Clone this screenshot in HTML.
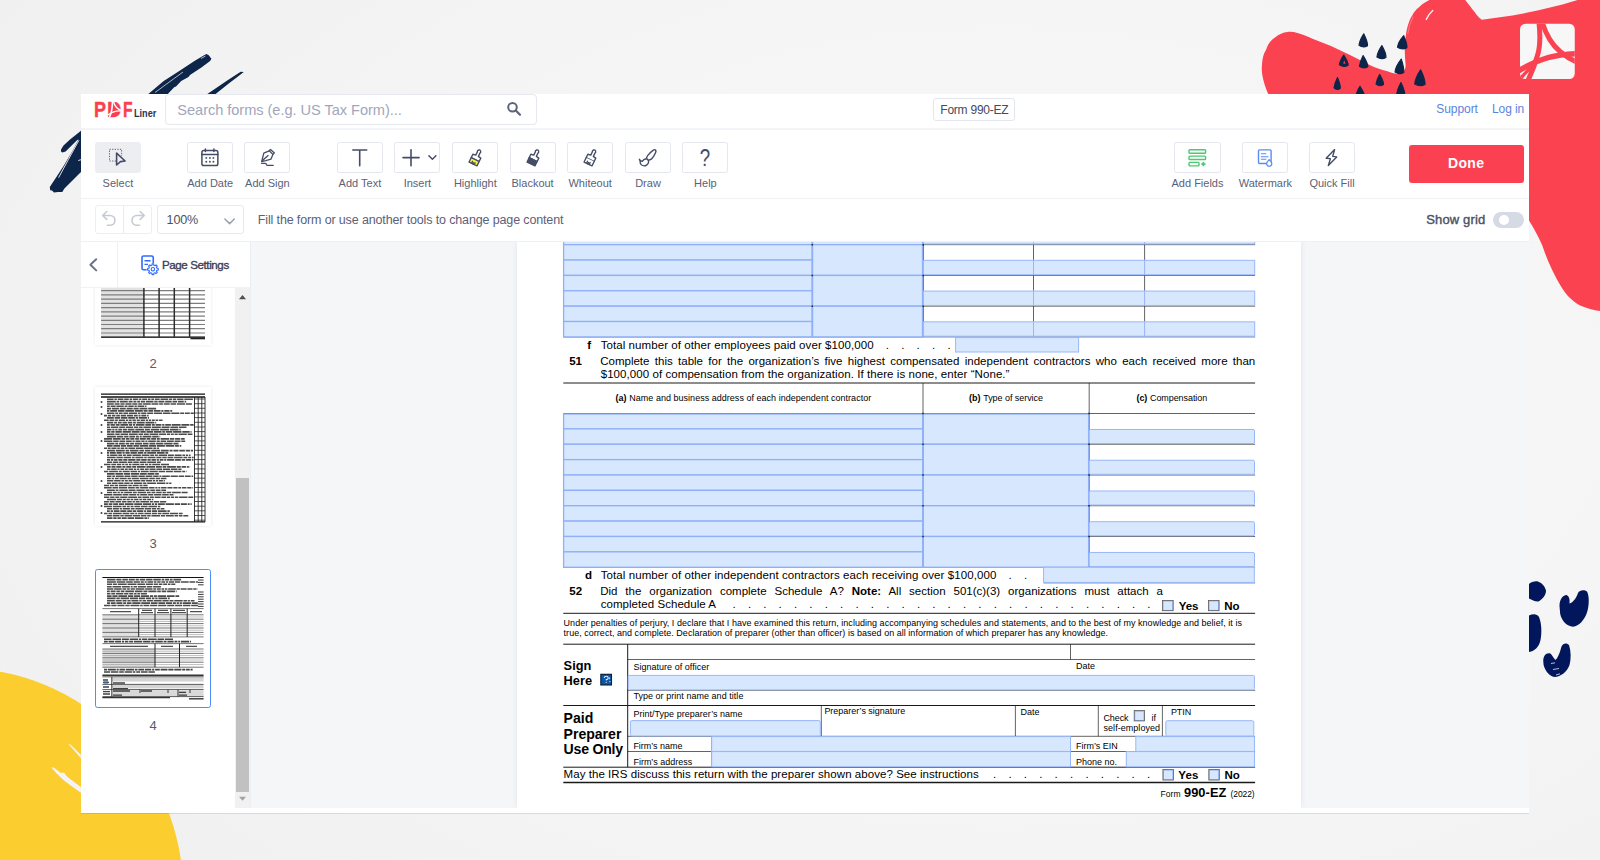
<!DOCTYPE html>
<html lang="en"><head><meta charset="utf-8"><title>Form 990-EZ - PDFLiner</title>
<style>
html,body{margin:0;padding:0}
body{width:1600px;height:860px;overflow:hidden;position:relative;background:#f2f2f2;font-family:"Liberation Sans", "DejaVu Sans", sans-serif;}
#root{position:absolute;left:0;top:0;width:1600px;height:860px;overflow:hidden;
 background:radial-gradient(ellipse 1300px 800px at 1000px 400px,#f8f8f8 0%,#f5f5f5 50%,#efefef 100%);}
#root div,#root svg{position:absolute;box-sizing:border-box}
.t{white-space:nowrap;color:#000}
</style></head><body><div id="root">
<svg width="1600" height="860" viewBox="0 0 1600 860" style="left:0;top:0"><circle cx="-40.3" cy="891.4" r="223.4" fill="#fbcd2e"/><path d="M68.4,744 L70.5,744.6 L82,756 L82,759.5 Z" fill="#f4f4f4"/><path d="M51.3,767.2 L54,767.8 L61,773 L64,772.6 L67,776.6 L82,788 L82,793.5 L72,786.5 L60,777.5 Z" fill="#f4f4f4"/><path d="M57,774 L71,788" stroke="#fbcd2e" stroke-width="0.8" fill="none"/><path d="M1271,100 C1263,84 1261,72 1262,65 C1262.5,57 1264,53 1266,50 C1268,44 1271,40 1275,37.5 C1279,34 1283,32.5 1287.5,32 C1291,31.6 1294,32 1297.5,33 C1303,34.5 1307,36.5 1312.5,38.75 L1331,46 L1350,55 L1368.75,64.4 C1375,67.5 1381,69.5 1387.5,71.25 C1391,72.5 1394,73.5 1397.5,73.75 C1400,73.6 1402,72.8 1403.75,71 C1405,69.5 1405.6,68 1405.6,65 C1405.2,60 1404.75,55 1404.75,50 C1404.75,46 1405,42 1405.6,37.5 C1406,33 1406.8,29 1408,25 C1409,21.5 1410.5,18 1412.5,15 C1414,12 1416,9.5 1418.75,7.5 C1421,5 1424,2.8 1427.5,1 L1435,-3 L1463,-3 C1466,1 1468,3.5 1470,6 C1472,9 1473.5,10.5 1475,12.5 C1477,15.5 1479,18 1481.9,19.75 L1512.5,15.6 L1537.5,10.6 L1562.5,4.4 L1577.5,0 L1590,-3 L1603,-3 L1603,311.4 L1600,311 C1595,310.2 1591,309.5 1587,308 C1582,306.5 1578,304.5 1574,301.4 C1569.5,298 1566,294.5 1562.8,289.3 C1558.5,282.5 1555,276 1551.6,268.8 C1548,261 1545,253.5 1542.3,245.6 C1538.5,236.5 1534,228.5 1529,220.5 L1520,210 L1520,100 Z" fill="#fa4251"/><path d="M1432.75,10.6 Q1428.5,14.5 1426.25,19.4" stroke="#fdeff0" stroke-width="1.4" fill="none" stroke-linecap="round"/><path d="M1413,17 Q1409,25 1407.75,33.75" stroke="#fd7d87" stroke-width="0.9" fill="none" stroke-linecap="round"/><rect x="1520" y="23.75" width="54.75" height="55.25" rx="5.5" fill="#f7f7f8"/><clipPath id="lg"><rect x="1520" y="23.75" width="54.75" height="55.25" rx="5.5"/></clipPath><g clip-path="url(#lg)" stroke="#fa4251" fill="none"><path d="M1538.8,21 C1540.6,36 1540,48 1537.3,56 C1535,64 1532,72 1527.3,82" stroke-width="5"/><path d="M1541.3,19 C1545,33 1551,44 1560,51.5 C1566,56.5 1571,59.8 1578,62.6" stroke-width="5"/><path d="M1517,72 C1526,66 1536,61 1548,57.6 C1558,55 1567,54 1578,53.6" stroke-width="5.5"/><path d="M1518,81 L1531.5,66.5" stroke-width="3.4"/></g><g fill="#0d2548" stroke="#0d2548" stroke-width="1.1" stroke-linejoin="round"><path d="M1363.75,33.75 Q1368,42.325 1367.5,45.9 Q1363.25,48.4 1359,45.4 Q1359.5,40.325 1363.75,33.75Z"/><path d="M1403.75,35.6 Q1407.4,44.175 1406.9,47.75 Q1402.2,50.25 1397.5,47.25 Q1398,42.175 1403.75,35.6Z"/><path d="M1381.9,45.6 Q1386.5,54.05 1386,57.5 Q1381.45,60 1376.9,57 Q1377.4,52.05 1381.9,45.6Z"/><path d="M1343.75,55 Q1348.6,62.625 1348.1,65.25 Q1343.75,67.75 1339.4,64.75 Q1339.9,60.625 1343.75,55Z"/><path d="M1363.1,55.6 Q1368.25,63.75 1367.75,66.9 Q1363.58,69.4 1359.4,66.4 Q1359.9,61.75 1363.1,55.6Z"/><path d="M1401.25,59 Q1404.25,68.25 1403.75,72.5 Q1399.38,75 1395,72 Q1395.5,66.25 1401.25,59Z"/><path d="M1420.6,69.75 Q1425.5,79.675 1425,84.6 Q1419.88,87.1 1414.75,84.1 Q1415.25,77.675 1420.6,69.75Z"/><path d="M1337.5,77.5 Q1340.75,85.45 1340.25,88.4 Q1337.12,90.9 1334,87.9 Q1334.5,83.45 1337.5,77.5Z"/><path d="M1379.75,74.4 Q1384,82 1383.5,84.6 Q1379.75,87.1 1376,84.1 Q1376.5,80 1379.75,74.4Z"/><path d="M1360,86.25 Q1365.3,94.625 1364.8,98 Q1360.2,100.5 1355.6,97.5 Q1356.1,92.625 1360,86.25Z"/><path d="M1401,82.5 Q1405.3,91.75 1404.8,96 Q1400.65,98.5 1396.5,95.5 Q1397,89.75 1401,82.5Z"/></g><path d="M1344.2,60.5 L1345.6,63.8 L1343.2,63.6Z" fill="#fa4251"/><g fill="#0d2548"><path d="M206.2,54 L208.5,55 L209.5,56.2 L211.4,58.8 L210.1,61 L201.4,67.6 L190,75 L188.5,77 L181.2,81.1 L176,86.5 L174.2,87.2 L163,99 L143,99 L148.9,93.5 L163.7,81.1 L181.2,69.7 L194.4,61 Z"/><path d="M243.8,71.9 L240.7,71.7 L227.6,80.2 L200,99 L210,99 L216.2,93.5 L229.4,82.9 L236,78 Z"/><path d="M84,128 L81,130.7 L70,139.5 L63.5,145.5 L60.9,149.8 L61.2,151.8 L62.3,152.6 L65.6,151.6 L77.2,140 L78.6,139.6 L72.6,150.7 L63.3,166.5 L49.8,187 L50.2,190.2 L52,190.6 L54,192.6 L58,192 L62.3,192.1 L64.2,188.8 L81,172 L84,170 Z"/></g><path d="M155,92.5 L183,72" stroke="#f4f4f4" stroke-width="0.7" fill="none"/><path d="M201,58.5 L205.5,56" stroke="#f4f4f4" stroke-width="0.7" fill="none"/><path d="M58.6,177.7 Q68,160 78.9,140.4" stroke="#f4f4f4" stroke-width="0.9" fill="none"/><path d="M78.2,160.5 L81.5,159.6" stroke="#f4f4f4" stroke-width="0.9" fill="none"/><g fill="#02165b"><path d="M1525,584 L1529,584 C1531,582 1534,581 1537,581.2 C1541,582 1545,586 1546,590.5 C1546,595 1543,599 1538.5,601.5 C1535,601.8 1532,600 1529,598.5 L1525,598.5Z"/><path d="M1525,615.5 L1529,615.5 C1533,613.5 1537,613.5 1539,617 C1541.5,623 1542,632 1540.5,640 C1539,647 1535,651 1529,652 L1525,652Z"/><path d="M1559.5,606 C1559.5,600 1562,596 1566,595 C1569,595.5 1570,599 1569.5,603.5 C1573,602.5 1576.5,598 1578,593 C1579.5,590 1584,589.2 1587,591.5 C1589.5,596 1589.2,606 1587,612.5 C1584.5,620 1579,626 1573,626.8 C1567,626 1562,621.5 1560.2,614 Z"/><path d="M1543.3,661.5 C1543,656 1546,652.5 1550,653.3 C1552.5,655 1553,658 1555.5,660 C1558,658 1560,652 1561.5,646.5 C1563,643 1567,642.5 1569,645 C1571,651 1571.2,659 1569.5,665 C1567,672 1561,676.5 1554.5,677 C1549,676 1545,670.5 1543.6,665 Z"/></g><path d="M1551,663.5 L1555,662.8 M1553,669.5 L1559,668.5 M1556,675 L1560,673.8" stroke="#e8e9f2" stroke-width="0.8" fill="none"/></svg>
<div style="left:81px;top:94px;width:1448px;height:719px;background:#fff"></div>
<div style="left:81px;top:813px;width:1448px;height:1px;background:rgba(0,0,0,.10)"></div>
<div style="left:81px;top:241px;width:1448px;height:567px;background:#f5f6f8"></div>
<div style="left:517.2px;top:241.2px;width:784.2px;height:566.6px;background:#fff;box-shadow:0 0 6px rgba(40,50,90,0.09)"></div>
<svg style="left:517px;top:241px" width="785" height="567" viewBox="517 241 785 567"><path d="M1043.60,582.90H1255.10M627.70,690.40H1255.10M711.70,736.30V767.20" stroke="#1a1a1a" stroke-width="0.6" fill="none"/><path d="M563.30,244.66H1255.10M563.30,275.41H1255.10M563.30,306.15H1255.10M563.30,336.90H1255.10M812.30,241.20V336.90M923.40,241.20V336.90M1033.50,241.20V336.90M1144.60,241.20V336.90M563.30,413.50H1255.10M923.00,383.00V567.23M1089.20,383.00V567.23M563.30,444.25H1255.10M563.30,474.99H1255.10M563.30,505.74H1255.10M563.30,536.48H1255.10M563.30,567.23H1255.10M627.70,659.50H1255.10M1070.50,644.20V659.50M821.30,705.50V736.30M1015.40,705.50V736.30M1098.30,705.50V736.30M1162.40,705.50V736.30M627.70,736.30H1255.10M1070.50,736.30V767.20M627.70,751.50H1255.10" stroke="#1a1a1a" stroke-width="0.68" fill="none"/><path d="M563.30,383.00H1255.10M563.30,613.30H1255.10M563.30,644.20H1255.10M627.70,644.20V767.20M563.30,705.50H1255.10M563.30,767.20H1255.10" stroke="#1a1a1a" stroke-width="1.0" fill="none"/><path d="M563.30,782.50H1255.10" stroke="#1a1a1a" stroke-width="1.5" fill="none"/><g fill="#d7e8fe" stroke="#8fb0f8" stroke-width="1.3"><rect x="563.60" y="235.00" width="248.40" height="9.66"/><rect x="563.60" y="244.66" width="248.40" height="15.37"/><rect x="563.60" y="260.03" width="248.40" height="15.37"/><rect x="563.60" y="275.41" width="248.40" height="15.37"/><rect x="563.60" y="290.78" width="248.40" height="15.37"/><rect x="563.60" y="306.15" width="248.40" height="15.37"/><rect x="563.60" y="321.53" width="248.40" height="15.37"/><rect x="812.60" y="235.00" width="109.90" height="9.66"/><rect x="812.60" y="244.66" width="109.90" height="30.75"/><rect x="812.60" y="275.41" width="109.90" height="30.75"/><rect x="812.60" y="306.15" width="109.90" height="30.75"/><rect x="563.60" y="414.00" width="359.10" height="14.87"/><rect x="563.60" y="428.87" width="359.10" height="15.37"/><rect x="563.60" y="444.25" width="359.10" height="15.37"/><rect x="563.60" y="459.62" width="359.10" height="15.37"/><rect x="563.60" y="474.99" width="359.10" height="15.37"/><rect x="563.60" y="490.37" width="359.10" height="15.37"/><rect x="563.60" y="505.74" width="359.10" height="15.37"/><rect x="563.60" y="521.11" width="359.10" height="15.37"/><rect x="563.60" y="536.48" width="359.10" height="15.37"/><rect x="563.60" y="551.86" width="359.10" height="15.37"/><rect x="923.30" y="414.00" width="165.30" height="30.25"/><rect x="923.30" y="444.25" width="165.30" height="30.75"/><rect x="923.30" y="474.99" width="165.30" height="30.75"/><rect x="923.30" y="505.74" width="165.30" height="30.75"/><rect x="923.30" y="536.48" width="165.30" height="30.75"/></g><g fill="#d7e8fe" stroke="#98b7f9" stroke-width="1"><rect x="923.40" y="235.00" width="110.10" height="8.96"/><rect x="923.40" y="260.33" width="110.10" height="14.37"/><rect x="923.40" y="291.08" width="110.10" height="14.37"/><rect x="923.40" y="321.83" width="110.10" height="14.37"/><rect x="1033.50" y="235.00" width="111.10" height="8.96"/><rect x="1033.50" y="260.33" width="111.10" height="14.37"/><rect x="1033.50" y="291.08" width="111.10" height="14.37"/><rect x="1033.50" y="321.83" width="111.10" height="14.37"/><rect x="1144.60" y="235.00" width="110.10" height="8.96"/><rect x="1144.60" y="260.33" width="110.10" height="14.37"/><rect x="1144.60" y="291.08" width="110.10" height="14.37"/><rect x="1144.60" y="321.83" width="110.10" height="14.37"/><rect x="955.60" y="337.60" width="123.00" height="14.40"/><rect x="1089.20" y="429.47" width="165.30" height="14.07" rx="1.5"/><rect x="1089.20" y="460.22" width="165.30" height="14.07" rx="1.5"/><rect x="1089.20" y="490.97" width="165.30" height="14.07" rx="1.5"/><rect x="1089.20" y="521.71" width="165.30" height="14.07" rx="1.5"/><rect x="1089.20" y="552.46" width="165.30" height="14.07" rx="1.5"/><rect x="1043.60" y="567.23" width="210.70" height="15.17"/><rect x="1163.10" y="601.10" width="9.50" height="9.30"/><rect x="1209.10" y="601.10" width="9.40" height="9.30"/><rect x="628.20" y="675.40" width="626.20" height="14.50" rx="1.2"/><rect x="630.40" y="720.60" width="189.90" height="15.40" rx="1.5"/><rect x="1134.80" y="711.30" width="9.10" height="9.30"/><rect x="1165.80" y="720.70" width="88.00" height="15.30" rx="1.5"/><rect x="711.70" y="736.60" width="358.80" height="14.80"/><rect x="1135.80" y="736.60" width="118.70" height="14.80"/><rect x="711.70" y="751.60" width="358.80" height="15.20"/><rect x="1126.30" y="751.60" width="128.20" height="15.20"/><rect x="1163.50" y="770.20" width="9.30" height="9.50"/><rect x="1209.40" y="770.20" width="9.30" height="9.50"/></g><path d="M811.55,243.91h1.5v1.5h-1.5zM922.45,243.91h1.5v1.5h-1.5zM811.55,274.66h1.5v1.5h-1.5zM922.45,274.66h1.5v1.5h-1.5zM811.55,305.40h1.5v1.5h-1.5zM922.45,305.40h1.5v1.5h-1.5zM922.25,412.75h1.5v1.5h-1.5zM1088.25,412.75h1.5v1.5h-1.5zM922.25,443.50h1.5v1.5h-1.5zM1088.25,443.50h1.5v1.5h-1.5zM922.25,474.24h1.5v1.5h-1.5zM1088.25,474.24h1.5v1.5h-1.5zM922.25,504.99h1.5v1.5h-1.5zM1088.25,504.99h1.5v1.5h-1.5zM922.25,535.73h1.5v1.5h-1.5zM1088.25,535.73h1.5v1.5h-1.5z" fill="#222"/><g fill="none" stroke="#5a5a5a" stroke-width="0.8"><rect x="1162.50" y="600.40" width="10.70" height="10.30"/><rect x="1208.50" y="600.40" width="10.60" height="10.30"/><rect x="1134.20" y="710.60" width="10.30" height="10.30"/><rect x="1162.90" y="769.50" width="10.50" height="10.50"/><rect x="1208.80" y="769.50" width="10.50" height="10.50"/></g><rect x="600.85" y="674.35" width="10.6" height="10.6" fill="#0b56a6" stroke="#0a2240" stroke-width="1.2"/><path d="M604.4,677.9 A1.9,1.7 0 1 1 606.3,679.6 L606.3,680.6" stroke="#e4eefb" stroke-width="1.1" fill="none"/><path d="M605.7,682.3h1.2M609.6,677.4v1.8M609.9,681v1.2" stroke="#cfe0f6" stroke-width="1" fill="none"/></svg>
<div class="t" style="top:339px;font-size:11.53px;line-height:12px;font-weight:700;left:587.20px;">f</div>
<div class="t" style="top:339px;font-size:11.53px;line-height:12px;letter-spacing:0.069px;left:600.70px;">Total number of other employees paid over $100,000</div>
<div class="t" style="top:339px;font-size:11.53px;line-height:12px;left:885.72px;letter-spacing:12.245px;">.....</div>
<div class="t" style="top:355px;font-size:11.53px;line-height:12px;font-weight:700;left:569.20px;">51</div>
<div class="t" style="left:600.20px;top:355px;width:655.10px;font-size:11.53px;line-height:12px;text-align:justify;text-align-last:justify;white-space:normal">Complete this table for the organization’s five highest compensated independent contractors who each received more than</div>
<div class="t" style="top:368px;font-size:11.53px;line-height:12px;letter-spacing:0.062px;left:600.70px;">$100,000 of compensation from the organization. If there is none, enter “None.”</div>
<div class="t" style="top:393px;font-size:8.97px;line-height:10px;font-weight:700;left:615.60px;">(a)</div>
<div class="t" style="top:393px;font-size:8.97px;line-height:10px;letter-spacing:0.038px;left:629.30px;">Name and business address of each independent contractor</div>
<div class="t" style="top:393px;font-size:8.97px;line-height:10px;font-weight:700;left:969.00px;">(b)</div>
<div class="t" style="top:393px;font-size:8.97px;line-height:10px;letter-spacing:-0.038px;left:983.20px;">Type of service</div>
<div class="t" style="top:393px;font-size:8.97px;line-height:10px;font-weight:700;left:1136.40px;">(c)</div>
<div class="t" style="top:393px;font-size:8.97px;line-height:10px;letter-spacing:-0.059px;left:1150.00px;">Compensation</div>
<div class="t" style="top:569px;font-size:11.53px;line-height:12px;font-weight:700;left:584.90px;">d</div>
<div class="t" style="top:569px;font-size:11.53px;line-height:12px;letter-spacing:0.079px;left:600.70px;">Total number of other independent contractors each receiving over $100,000</div>
<div class="t" style="top:569px;font-size:11.53px;line-height:12px;left:1008.62px;letter-spacing:12.245px;">..</div>
<div class="t" style="top:585px;font-size:11.53px;line-height:12px;font-weight:700;left:569.30px;">52</div>
<div class="t" style="left:600.20px;top:585px;width:562.80px;font-size:11.53px;line-height:12px;text-align:justify;text-align-last:justify;white-space:normal">Did the organization complete Schedule A? <b>Note:</b> All section 501(c)(3) organizations must attach a</div>
<div class="t" style="top:598px;font-size:11.53px;line-height:12px;letter-spacing:0.040px;left:600.70px;">completed Schedule A</div>
<div class="t" style="top:598px;font-size:11.53px;line-height:12px;left:732.52px;letter-spacing:12.165px;">............................</div>
<div class="t" style="top:600px;font-size:11.53px;line-height:12px;font-weight:700;letter-spacing:-0.125px;left:1178.80px;">Yes</div>
<div class="t" style="top:600px;font-size:11.53px;line-height:12px;font-weight:700;letter-spacing:-0.016px;left:1224.30px;">No</div>
<div class="t" style="top:618px;font-size:8.97px;line-height:10px;letter-spacing:0.044px;left:563.60px;">Under penalties of perjury, I declare that I have examined this return, including accompanying schedules and statements, and to the best of my knowledge and belief, it is</div>
<div class="t" style="top:628px;font-size:8.97px;line-height:10px;letter-spacing:0.038px;left:563.60px;">true, correct, and complete. Declaration of preparer (other than officer) is based on all information of which preparer has any knowledge.</div>
<div class="t" style="top:658px;font-size:12.8px;line-height:15px;font-weight:700;left:563.60px;">Sign</div>
<div class="t" style="top:673px;font-size:12.8px;line-height:15px;font-weight:700;left:563.60px;">Here</div>
<div class="t" style="top:662px;font-size:8.97px;line-height:10px;letter-spacing:0.040px;left:633.40px;">Signature of officer</div>
<div class="t" style="top:661px;font-size:8.97px;line-height:10px;left:1076.00px;">Date</div>
<div class="t" style="top:691px;font-size:8.97px;line-height:10px;letter-spacing:0.048px;left:633.40px;">Type or print name and title</div>
<div class="t" style="top:710px;font-size:14.1px;line-height:16px;font-weight:700;left:563.60px;">Paid</div>
<div class="t" style="top:726px;font-size:14.1px;line-height:16px;font-weight:700;letter-spacing:-0.028px;left:563.60px;">Preparer</div>
<div class="t" style="top:741px;font-size:14.1px;line-height:16px;font-weight:700;letter-spacing:-0.237px;left:563.60px;">Use Only</div>
<div class="t" style="top:709px;font-size:8.97px;line-height:10px;letter-spacing:0.034px;left:633.40px;">Print/Type preparer’s name</div>
<div class="t" style="top:706px;font-size:8.97px;line-height:10px;letter-spacing:-0.007px;left:824.40px;">Preparer’s signature</div>
<div class="t" style="top:707px;font-size:8.97px;line-height:10px;left:1020.50px;">Date</div>
<div class="t" style="top:713px;font-size:8.97px;line-height:10px;letter-spacing:-0.109px;left:1103.50px;">Check</div>
<div class="t" style="top:713px;font-size:8.97px;line-height:10px;left:1151.60px;">if</div>
<div class="t" style="top:723px;font-size:8.97px;line-height:10px;letter-spacing:0.055px;left:1103.50px;">self-employed</div>
<div class="t" style="top:707px;font-size:8.97px;line-height:10px;left:1170.90px;">PTIN</div>
<div class="t" style="top:741px;font-size:8.97px;line-height:10px;letter-spacing:-0.018px;left:633.40px;">Firm’s name</div>
<div class="t" style="top:741px;font-size:8.97px;line-height:10px;letter-spacing:0.010px;left:1076.00px;">Firm’s EIN</div>
<div class="t" style="top:757px;font-size:8.97px;line-height:10px;letter-spacing:0.011px;left:633.40px;">Firm’s address</div>
<div class="t" style="top:757px;font-size:8.97px;line-height:10px;left:1076.00px;">Phone no.</div>
<div class="t" style="top:768px;font-size:11.53px;line-height:12px;letter-spacing:0.046px;left:563.60px;">May the IRS discuss this return with the preparer shown above? See instructions</div>
<div class="t" style="top:768px;font-size:11.53px;line-height:12px;left:993.02px;letter-spacing:12.195px;">...........</div>
<div class="t" style="top:769px;font-size:11.53px;line-height:12px;font-weight:700;letter-spacing:0.075px;left:1178.30px;">Yes</div>
<div class="t" style="top:769px;font-size:11.53px;line-height:12px;font-weight:700;letter-spacing:-0.116px;left:1224.50px;">No</div>
<div class="t" style="top:789px;font-size:8.5px;line-height:10px;letter-spacing:0.083px;left:1160.40px;">Form</div>
<div class="t" style="top:785px;font-size:12.8px;line-height:15px;font-weight:700;letter-spacing:0.070px;left:1184.00px;">990-EZ</div>
<div class="t" style="top:789px;font-size:8.5px;line-height:10px;letter-spacing:-0.108px;left:1230.60px;">(2022)</div>
<div style="left:81px;top:241px;width:170.2px;height:567px;background:#fff;border-right:1px solid #eceef3"></div>
<div style="left:94.6px;top:230px;width:116.6px;height:114.5px;box-shadow:0 0 3px rgba(60,70,100,.13);background:#fff;"></div>
<svg style="left:81px;top:241px" width="170" height="567" viewBox="81 241 170 567"><rect x="101.1" y="288" width="42.5" height="49" fill="#e2e2e2"/><path d="M101.1,337.2H205M101.1,333.0H205M101.1,328.7H205M101.1,324.5H205M101.1,320.3H205M101.1,316.1H205M101.1,311.8H205M101.1,307.6H205M101.1,303.4H205M101.1,299.1H205M101.1,294.9H205M101.1,290.7H205" stroke="#7d7d7d" stroke-width="1.2" fill="none" opacity="1"/><path d="M143.9,286V337.6M159.1,286V337.6M174.3,286V337.6M189.6,286V337.6" stroke="#2c2c2c" stroke-width="1.5" fill="none"/><path d="M101.1,337.3H205" stroke="#3a3a3a" stroke-width="1.6" fill="none"/><path d="M190.5,338.6H205" stroke="#222" stroke-width="1.4" fill="none"/></svg>
<div style="left:94.6px;top:387.4px;width:116.6px;height:139px;box-shadow:0 0 3px rgba(60,70,100,.13);background:#fff;"></div>
<svg style="left:94px;top:387px" width="118" height="140" viewBox="94 387 118 140"><path d="M101,394.2H205M101,397H205" stroke="#111" stroke-width="1.3" fill="none"/><path d="M107.0,399.3H113.6M114.4,399.3H116.9M117.7,399.3H123.4M124.2,399.3H128.8M129.6,399.3H132.0M132.8,399.3H138.3M139.1,399.3H141.4M142.2,399.3H147.2M148.0,399.3H150.5M151.3,399.3H154.0M154.8,399.3H159.7M160.5,399.3H168.3M169.1,399.3H172.0M172.8,399.3H176.3M177.1,399.3H183.5M184.3,399.3H192.9M107.0,401.6H115.8M116.6,401.6H119.0M119.8,401.6H127.8M128.6,401.6H132.6M133.4,401.6H136.4M137.2,401.6H140.0M140.8,401.6H145.0M145.8,401.6H153.5M154.3,401.6H157.6M158.4,401.6H164.4M165.2,401.6H171.7M172.5,401.6H177.1M177.9,401.6H183.8M184.6,401.6H186.2M107.0,404.0H113.8M114.6,404.0H119.6M120.4,404.0H124.6M125.4,404.0H131.5M132.3,404.0H137.4M138.2,404.0H142.3M143.1,404.0H150.7M151.5,404.0H158.4M159.2,404.0H162.9M163.7,404.0H169.7M170.5,404.0H176.2M177.0,404.0H185.1M185.9,404.0H191.9M107.0,406.3H109.8M110.6,406.3H115.6M116.4,406.3H123.7M124.5,406.3H127.5M128.3,406.3H133.7M134.5,406.3H136.8M137.6,406.3H144.3M145.1,406.3H146.4M107.0,408.6H111.2M112.0,408.6H118.9M119.7,408.6H125.8M126.6,408.6H132.7M133.5,408.6H138.7M139.5,408.6H147.4M148.2,408.6H156.1M107.0,410.9H109.4M110.2,410.9H117.1M117.9,410.9H124.5M125.3,410.9H134.2M135.0,410.9H142.8M143.6,410.9H147.6M148.4,410.9H153.1M153.9,410.9H160.5M161.3,410.9H163.5M164.3,410.9H169.5M170.3,410.9H172.2M107.0,413.3H114.4M115.2,413.3H118.1M118.9,413.3H122.6M123.4,413.3H128.2M129.0,413.3H137.1M137.9,413.3H140.4M141.2,413.3H146.4M147.2,413.3H153.0M153.8,413.3H162.0M162.8,413.3H170.5M171.3,413.3H179.4M180.2,413.3H184.1M184.9,413.3H189.8M190.6,413.3H193.8M104.0,415.6H107.1M107.9,415.6H111.1M111.9,415.6H115.5M116.3,415.6H119.9M120.7,415.6H126.1M126.9,415.6H133.1M133.9,415.6H137.7M138.5,415.6H140.5M141.3,415.6H146.3M147.1,415.6H148.6M107.0,417.9H113.8M114.6,417.9H120.2M121.0,417.9H127.4M128.2,417.9H134.9M135.7,417.9H138.1M138.9,417.9H147.2M148.0,417.9H149.0M104.0,420.3H108.7M109.5,420.3H114.3M115.1,420.3H117.9M118.7,420.3H125.1M125.9,420.3H128.3M129.1,420.3H131.6M132.4,420.3H135.9M136.7,420.3H139.8M140.6,420.3H145.0M145.8,420.3H148.2M149.0,420.3H151.0M151.8,420.3H154.8M155.6,420.3H158.3M159.1,420.3H162.5M107.0,422.6H113.3M114.1,422.6H117.1M117.9,422.6H121.7M122.5,422.6H126.9M127.7,422.6H132.3M133.1,422.6H135.9M136.7,422.6H144.7M145.5,422.6H154.4M155.2,422.6H156.2M107.0,424.9H109.7M110.5,424.9H114.9M115.7,424.9H119.6M120.4,424.9H128.2M129.0,424.9H132.1M132.9,424.9H135.1M135.9,424.9H144.5M145.3,424.9H151.0M151.8,424.9H154.8M155.6,424.9H161.4M162.2,424.9H164.4M165.2,424.9H170.9M171.7,424.9H180.6M181.4,424.9H189.4M190.2,424.9H193.6M107.0,427.3H110.2M111.0,427.3H118.4M119.2,427.3H124.9M125.7,427.3H133.2M134.0,427.3H138.3M139.1,427.3H142.6M143.4,427.3H151.1M151.9,427.3H160.8M161.6,427.3H169.6M170.4,427.3H178.0M178.8,427.3H186.5M187.3,427.3H187.3M107.0,429.6H111.5M112.3,429.6H114.5M115.3,429.6H117.5M118.3,429.6H122.2M123.0,429.6H126.9M127.7,429.6H134.5M135.3,429.6H144.0M144.8,429.6H149.9M150.7,429.6H159.3M160.1,429.6H169.0M169.8,429.6H178.5M179.3,429.6H180.7M107.0,431.9H110.4M111.2,431.9H114.6M115.4,431.9H121.8M122.6,431.9H130.9M131.7,431.9H139.6M140.4,431.9H145.7M146.5,431.9H153.1M153.9,431.9H161.5M162.3,431.9H164.9M165.7,431.9H172.3M173.1,431.9H181.5M182.3,431.9H189.7M190.5,431.9H191.5M107.0,434.2H114.5M115.3,434.2H119.7M120.5,434.2H128.1M128.9,434.2H137.7M138.5,434.2H143.2M144.0,434.2H148.8M149.6,434.2H158.3M159.1,434.2H166.1M166.9,434.2H170.1M170.9,434.2H173.8M174.6,434.2H177.7M178.5,434.2H186.8M187.6,434.2H192.4M107.0,436.6H115.9M116.7,436.6H123.3M124.1,436.6H128.5M129.3,436.6H135.2M136.0,436.6H138.9M139.7,436.6H141.8M142.6,436.6H151.4M152.2,436.6H158.7M159.5,436.6H160.2M104.0,438.9H112.1M112.9,438.9H120.7M121.5,438.9H125.0M125.8,438.9H129.5M130.3,438.9H134.4M135.2,438.9H138.9M139.7,438.9H145.8M146.6,438.9H150.4M151.2,438.9H156.1M156.9,438.9H159.8M160.6,438.9H169.0M169.8,438.9H174.3M175.1,438.9H180.3M181.1,438.9H184.7M104.0,441.2H112.4M113.2,441.2H118.7M119.5,441.2H125.3M126.1,441.2H131.7M132.5,441.2H134.7M135.5,441.2H140.5M141.3,441.2H144.6M145.4,441.2H147.4M148.2,441.2H155.8M156.6,441.2H159.8M160.6,441.2H166.0M166.8,441.2H173.8M174.6,441.2H180.5M181.3,441.2H185.2M107.0,443.6H114.5M115.3,443.6H118.0M118.8,443.6H124.8M125.6,443.6H129.3M130.1,443.6H134.0M134.8,443.6H142.2M143.0,443.6H148.6M149.4,443.6H155.3M156.1,443.6H163.4M164.2,443.6H172.6M173.4,443.6H178.5M107.0,445.9H112.6M113.4,445.9H120.2M121.0,445.9H126.2M127.0,445.9H132.7M133.5,445.9H138.9M139.7,445.9H148.3M149.1,445.9H156.0M156.8,445.9H164.9M165.7,445.9H174.3M175.1,445.9H178.9M179.7,445.9H181.3M104.0,448.2H107.0M107.8,448.2H110.6M111.4,448.2H116.5M117.3,448.2H119.8M120.6,448.2H124.3M125.1,448.2H127.6M128.4,448.2H135.1M135.9,448.2H143.4M144.2,448.2H152.5M153.3,448.2H156.3M157.1,448.2H159.1M107.0,450.6H115.2M116.0,450.6H124.8M125.6,450.6H129.1M129.9,450.6H138.6M139.4,450.6H144.1M144.9,450.6H150.4M151.2,450.6H160.1M160.9,450.6H168.7M169.5,450.6H172.6M173.4,450.6H178.5M179.3,450.6H184.9M185.7,450.6H190.0M190.8,450.6H193.0M107.0,452.9H109.1M109.9,452.9H115.8M116.6,452.9H121.7M122.5,452.9H124.6M125.4,452.9H129.7M130.5,452.9H136.9M137.7,452.9H143.3M144.1,452.9H146.5M147.3,452.9H156.2M157.0,452.9H164.6M165.4,452.9H168.2M107.0,455.2H109.3M110.1,455.2H117.5M118.3,455.2H122.2M123.0,455.2H125.9M126.7,455.2H131.7M132.5,455.2H140.9M141.7,455.2H149.4M150.2,455.2H154.0M154.8,455.2H157.9M158.7,455.2H167.1M167.9,455.2H173.9M174.7,455.2H181.6M182.4,455.2H185.0M185.8,455.2H188.2M189.0,455.2H190.5M107.0,457.5H115.6M116.4,457.5H122.8M123.6,457.5H131.2M132.0,457.5H134.6M135.4,457.5H143.4M144.2,457.5H146.7M147.5,457.5H155.5M156.3,457.5H161.5M162.3,457.5H166.7M167.5,457.5H173.3M174.1,457.5H182.6M183.4,457.5H187.3M188.1,457.5H191.0M191.8,457.5H193.7M107.0,459.9H110.1M110.9,459.9H113.3M114.1,459.9H117.5M118.3,459.9H122.5M123.3,459.9H127.4M128.2,459.9H135.5M136.3,459.9H140.4M141.2,459.9H146.7M147.5,459.9H150.7M151.5,459.9H155.9M156.7,459.9H158.9M159.7,459.9H163.4M164.2,459.9H166.3M167.1,459.9H174.3M175.1,459.9H180.9M181.7,459.9H185.0M185.8,459.9H191.2M192.0,459.9H193.4M107.0,462.2H112.0M112.8,462.2H118.3M119.1,462.2H126.9M127.7,462.2H132.5M133.3,462.2H138.8M139.6,462.2H146.4M147.2,462.2H156.1M156.9,462.2H160.8M104.0,464.5H110.5M111.3,464.5H116.1M116.9,464.5H121.3M122.1,464.5H124.5M125.3,464.5H128.2M129.0,464.5H131.5M132.3,464.5H139.5M140.3,464.5H144.1M144.9,464.5H148.0M148.8,464.5H151.4M152.2,464.5H160.1M160.9,464.5H169.0M107.0,466.9H110.7M111.5,466.9H115.5M116.3,466.9H121.6M122.4,466.9H125.5M126.3,466.9H131.4M132.2,466.9H136.0M136.8,466.9H145.6M146.4,466.9H155.2M156.0,466.9H161.8M162.6,466.9H166.3M167.1,466.9H175.9M176.7,466.9H180.8M181.6,466.9H186.1M186.9,466.9H188.9M189.7,466.9H190.1M107.0,469.2H110.4M111.2,469.2H116.7M117.5,469.2H119.6M120.4,469.2H124.2M125.0,469.2H127.7M128.5,469.2H133.2M134.0,469.2H136.3M137.1,469.2H139.3M140.1,469.2H144.2M145.0,469.2H148.7M149.5,469.2H155.6M156.4,469.2H162.1M162.9,469.2H170.1M170.9,469.2H177.5M178.3,469.2H181.5M104.0,471.5H108.3M109.1,471.5H118.0M118.8,471.5H121.8M122.6,471.5H129.7M130.5,471.5H137.0M137.8,471.5H140.1M140.9,471.5H148.7M149.5,471.5H157.8M158.6,471.5H165.0M165.8,471.5H172.9M173.7,471.5H181.4M182.2,471.5H185.2M186.0,471.5H186.5M107.0,473.9H114.6M115.4,473.9H123.2M124.0,473.9H130.1M130.9,473.9H139.2M140.0,473.9H146.7M147.5,473.9H154.4M155.2,473.9H158.8M107.0,476.2H111.5M112.3,476.2H115.1M115.9,476.2H123.7M124.5,476.2H130.4M131.2,476.2H137.6M138.4,476.2H144.8M145.6,476.2H152.4M153.2,476.2H158.6M159.4,476.2H161.4M162.2,476.2H169.8M170.6,476.2H177.8M178.6,476.2H184.2M185.0,476.2H190.7M191.5,476.2H193.1M107.0,478.5H110.8M111.6,478.5H114.1M114.9,478.5H118.7M119.5,478.5H126.7M127.5,478.5H130.9M131.7,478.5H138.9M139.7,478.5H148.5M149.3,478.5H154.8M155.6,478.5H160.2M161.0,478.5H166.4M107.0,480.8H113.3M114.1,480.8H120.6M121.4,480.8H124.0M124.8,480.8H127.8M128.6,480.8H132.4M133.2,480.8H140.4M141.2,480.8H145.3M146.1,480.8H152.1M152.9,480.8H155.0M155.8,480.8H158.2M159.0,480.8H162.9M163.7,480.8H164.9M107.0,483.2H111.0M111.8,483.2H117.5M118.3,483.2H123.5M124.3,483.2H129.6M130.4,483.2H133.2M134.0,483.2H142.3M143.1,483.2H146.4M147.2,483.2H156.1M156.9,483.2H165.4M166.2,483.2H168.4M169.2,483.2H171.4M104.0,485.5H109.1M109.9,485.5H113.8M114.6,485.5H118.1M118.9,485.5H127.5M128.3,485.5H131.8M132.6,485.5H138.7M139.5,485.5H142.5M143.3,485.5H147.6M104.0,487.8H111.7M112.5,487.8H118.1M118.9,487.8H127.1M127.9,487.8H134.8M135.6,487.8H139.3M140.1,487.8H148.3M149.1,487.8H154.5M155.3,487.8H157.5M158.3,487.8H160.3M161.1,487.8H166.6M167.4,487.8H172.5M173.3,487.8H177.5M178.3,487.8H181.2M182.0,487.8H186.4M187.2,487.8H191.5M192.3,487.8H193.1M107.0,490.2H114.9M115.7,490.2H118.5M119.3,490.2H127.8M128.6,490.2H135.6M136.4,490.2H144.7M145.5,490.2H149.5M150.3,490.2H154.9M155.7,490.2H160.5M161.3,490.2H166.1M107.0,492.5H112.0M112.8,492.5H116.7M117.5,492.5H119.9M120.7,492.5H123.4M124.2,492.5H132.0M132.8,492.5H136.8M137.6,492.5H146.2M147.0,492.5H150.7M151.5,492.5H155.4M156.2,492.5H161.7M162.5,492.5H165.9M166.7,492.5H171.3M172.1,492.5H180.8M181.6,492.5H187.6M104.0,494.8H112.4M113.2,494.8H121.8M122.6,494.8H128.4M129.2,494.8H136.3M137.1,494.8H139.4M140.2,494.8H147.3M148.1,494.8H153.3M154.1,494.8H161.4M162.2,494.8H168.7M169.5,494.8H173.5M174.3,494.8H174.3M104.0,497.2H109.3M110.1,497.2H114.5M115.3,497.2H119.4M120.2,497.2H127.4M128.2,497.2H137.0M137.8,497.2H141.6M142.4,497.2H149.0M149.8,497.2H153.9M154.7,497.2H160.6M161.4,497.2H166.2M167.0,497.2H170.2M171.0,497.2H174.1M174.9,497.2H178.3M179.1,497.2H187.5M188.3,497.2H193.2M107.0,499.5H116.0M116.8,499.5H121.9M122.7,499.5H125.7M126.5,499.5H129.8M130.6,499.5H133.3M134.1,499.5H138.5M139.3,499.5H141.9M142.7,499.5H146.4M147.2,499.5H151.0M151.8,499.5H153.3M104.0,501.8H108.9M109.7,501.8H114.6M115.4,501.8H121.1M121.9,501.8H126.5M127.3,501.8H131.7M132.5,501.8H134.9M135.7,501.8H139.6M140.4,501.8H149.2M150.0,501.8H152.9M153.7,501.8H159.2M160.0,501.8H166.2M104.0,504.1H107.9M108.7,504.1H112.4M113.2,504.1H118.0M118.8,504.1H124.0M124.8,504.1H133.4M134.2,504.1H142.2M143.0,504.1H151.1M151.9,504.1H154.0M154.8,504.1H157.1M157.9,504.1H164.8M165.6,504.1H173.9M174.7,504.1H180.0M180.8,504.1H186.9M187.7,504.1H189.7M190.5,504.1H191.7M104.0,506.5H112.0M112.8,506.5H121.6M122.4,506.5H126.1M126.9,506.5H129.7M130.5,506.5H133.6M134.4,506.5H140.0M140.8,506.5H147.6M148.4,506.5H157.0M157.8,506.5H160.3M107.0,508.8H112.2M113.0,508.8H118.9M119.7,508.8H121.9M122.7,508.8H130.2M131.0,508.8H134.6M135.4,508.8H143.9M144.7,508.8H151.2M152.0,508.8H156.1M156.9,508.8H159.8M160.6,508.8H164.4M107.0,511.1H109.8M110.6,511.1H113.1M113.9,511.1H119.5M120.3,511.1H126.4M127.2,511.1H131.9M132.7,511.1H136.3M137.1,511.1H143.3M144.1,511.1H146.2M147.0,511.1H151.1M151.9,511.1H157.1M157.9,511.1H166.6M167.4,511.1H169.8M104.0,513.5H107.6M108.4,513.5H112.2M113.0,513.5H121.7M122.5,513.5H129.4M130.2,513.5H134.4M135.2,513.5H137.3M138.1,513.5H143.6M144.4,513.5H151.1M151.9,513.5H156.9M157.7,513.5H161.5M162.3,513.5H169.0M169.8,513.5H178.2M179.0,513.5H182.6M107.0,515.8H111.9M112.7,515.8H119.5M120.3,515.8H123.7M124.5,515.8H132.1M132.9,515.8H140.1M140.9,515.8H146.4M147.2,515.8H150.6M151.4,515.8H160.2M161.0,515.8H165.2M166.0,515.8H173.7M174.5,515.8H178.2M179.0,515.8H182.5M183.3,515.8H188.3M107.0,518.1H112.5M113.3,518.1H116.6M117.4,518.1H120.9M121.7,518.1H126.7M127.5,518.1H134.1M134.9,518.1H143.6M144.4,518.1H147.4M148.2,518.1H149.1" stroke="#222" stroke-width="1.6" fill="none" opacity="0.82"/><path d="M194,399.0H205M194,403.7H205M194,408.3H205M194,413.0H205M194,417.6H205M194,422.3H205M194,427.0H205M194,431.6H205M194,436.3H205M194,440.9H205M194,445.6H205M194,450.3H205M194,454.9H205M194,459.6H205M194,464.2H205M194,468.9H205M194,473.6H205M194,478.2H205M194,482.9H205M194,487.5H205M194,492.2H205M194,496.9H205M194,501.5H205M194,506.2H205M194,510.8H205M194,515.5H205M194,520.2H205" stroke="#333" stroke-width="0.9" fill="none" opacity="0.9"/><path d="M194.5,397V522M198.2,397V522M201.8,397V522M205,397V522" stroke="#222" stroke-width="0.9" fill="none"/><path d="M101,521.8H205" stroke="#111" stroke-width="1.3" fill="none"/><path d="M101.5,401v2M101.5,406v2M101.5,413v2M101.5,424v2M101.5,431v2M101.5,440v2M101.5,452v2M101.5,466v2M101.5,480v2M101.5,492v2M101.5,505v2M101.5,512v2" stroke="#222" stroke-width="1.6" fill="none" opacity=".8"/></svg>
<div style="left:95px;top:569.3px;width:116.2px;height:138.3px;border:1.3px solid #4f8df7;border-radius:2.5px;background:#fff"></div>
<svg style="left:96px;top:571px" width="114" height="135" viewBox="96 571 114 135"><path d="M102.4,577.5H203.6" stroke="#111" stroke-width="1.2" fill="none"/><path d="M107.0,579.6H115.5M116.3,579.6H121.5M122.3,579.6H127.9M128.7,579.6H134.8M135.6,579.6H138.9M139.7,579.6H145.3M146.1,579.6H152.5M153.3,579.6H160.8M161.6,579.6H164.3M165.1,579.6H169.2M170.0,579.6H172.6M173.4,579.6H181.1M107.0,582.0H115.9M116.7,582.0H125.4M126.2,582.0H132.8M133.6,582.0H139.9M140.7,582.0H143.8M144.6,582.0H146.7M147.5,582.0H153.2M154.0,582.0H156.4M157.2,582.0H160.6M161.4,582.0H165.1M165.9,582.0H168.1M168.9,582.0H174.1M174.9,582.0H180.0M180.8,582.0H188.7M189.5,582.0H195.1M195.9,582.0H197.9M107.0,584.3H112.2M113.0,584.3H116.9M117.7,584.3H126.7M127.5,584.3H136.5M137.3,584.3H145.2M146.0,584.3H152.9M153.7,584.3H157.9M158.7,584.3H162.4M163.2,584.3H167.2M168.0,584.3H170.5M171.3,584.3H175.3M107.0,586.7H111.7M112.5,586.7H121.2M122.0,586.7H129.9M130.7,586.7H132.7M133.5,586.7H137.0M137.8,586.7H146.2M147.0,586.7H152.3M153.1,586.7H160.9M107.0,589.0H113.4M114.2,589.0H121.7M122.5,589.0H126.3M127.1,589.0H129.8M130.6,589.0H134.9M135.7,589.0H144.4M145.2,589.0H152.5M153.3,589.0H156.2M157.0,589.0H160.7M161.5,589.0H164.2M165.0,589.0H167.4M168.2,589.0H175.8M176.6,589.0H179.8M180.6,589.0H186.6M187.4,589.0H192.5M193.3,589.0H196.6M197.4,589.0H197.7M107.0,591.4H109.8M110.6,591.4H115.6M116.4,591.4H119.9M120.7,591.4H124.5M125.3,591.4H134.1M134.9,591.4H142.6M143.4,591.4H147.5M148.3,591.4H156.5M157.3,591.4H160.8M161.6,591.4H166.3M167.1,591.4H175.1M175.9,591.4H176.6M107.0,593.7H110.5M111.3,593.7H115.1M115.9,593.7H123.3M124.1,593.7H128.4M129.2,593.7H133.3M134.1,593.7H136.6M137.4,593.7H140.0M140.8,593.7H146.9M107.0,596.1H111.6M112.4,596.1H117.6M118.4,596.1H127.1M127.9,596.1H133.3M134.1,596.1H140.1M140.9,596.1H149.0M149.8,596.1H153.0M153.8,596.1H156.9M157.7,596.1H166.1M166.9,596.1H174.6M175.4,596.1H179.2M107.0,598.4H115.6M116.4,598.4H119.8M120.6,598.4H129.2M130.0,598.4H138.2M139.0,598.4H145.2M146.0,598.4H151.0M151.8,598.4H154.5M155.3,598.4H157.6M158.4,598.4H167.1M167.9,598.4H169.7M107.0,600.8H114.8M115.6,600.8H121.7M122.5,600.8H126.6M127.4,600.8H130.6M131.4,600.8H138.5M139.3,600.8H141.7M142.5,600.8H146.1M146.9,600.8H152.9M153.7,600.8H161.6M162.4,600.8H168.7M169.5,600.8H173.5M174.3,600.8H182.7M183.5,600.8H186.9M187.7,600.8H189.9M190.7,600.8H194.5M107.0,603.1H110.2M111.0,603.1H115.6M116.4,603.1H122.4M123.2,603.1H126.1M126.9,603.1H131.5M132.3,603.1H140.5M141.3,603.1H150.2M151.0,603.1H157.6M158.4,603.1H165.2M166.0,603.1H172.1M172.9,603.1H175.9M176.7,603.1H178.9M179.7,603.1H181.9M182.7,603.1H191.0M191.8,603.1H197.8M104.0,605.5H110.5M111.3,605.5H116.6M117.4,605.5H124.5M125.3,605.5H129.6M130.4,605.5H139.4M140.2,605.5H142.7M143.5,605.5H149.3M150.1,605.5H157.3M158.1,605.5H166.4M167.2,605.5H174.3M175.1,605.5H182.1M182.9,605.5H190.4M191.2,605.5H198.0" stroke="#222" stroke-width="1.6" fill="none" opacity="0.82"/><path d="M198,580.0H203.6M198,582.4H203.6M198,584.8H203.6M198,592.0H203.6M198,594.4H203.6M198,596.8H203.6M198,599.2H203.6M198,601.6H203.6M198,604.0H203.6M198,606.4H203.6" stroke="#222" stroke-width="1" fill="none" opacity="0.9"/><rect x="102.4" y="614.8" width="36.3" height="22.2" fill="#bbb" opacity=".45"/><path d="M102.4,608.6H203.6M102.4,614.8H203.6M102.4,619.2H203.6M102.4,623.6H203.6M102.4,628.0H203.6M102.4,632.4H203.6M102.4,636.9H203.6" stroke="#555" stroke-width="0.9" fill="none" opacity="0.9"/><path d="M138.7,617.0H203.6M138.7,621.4H203.6M138.7,625.8H203.6M138.7,630.2H203.6M138.7,634.6H203.6" stroke="#888" stroke-width="0.7" fill="none" opacity="0.8"/><path d="M138.7,608.6V637M155,608.6V637M170.9,608.6V637M187.2,608.6V637" stroke="#222" stroke-width="1" fill="none"/><path d="M110,611.6H131M142,610.4H152M141,612.6H153M158,610.4H168M157,612.6H169M173,610.4H185M172,612.6H186M190,611.6H202" stroke="#222" stroke-width="1.3" fill="none" opacity=".8"/><path d="M104.0,639.3H111.6M112.4,639.3H121.0M121.8,639.3H128.9M129.7,639.3H138.2M139.0,639.3H141.2M142.0,639.3H147.3M148.1,639.3H156.7M157.5,639.3H164.0M164.8,639.3H173.0M104.0,641.6H107.7M108.5,641.6H114.3M115.1,641.6H121.1M121.9,641.6H124.0M124.8,641.6H128.4M129.2,641.6H133.1M133.9,641.6H142.3M143.1,641.6H150.5M151.3,641.6H154.4M155.2,641.6H162.8M163.6,641.6H166.6M167.4,641.6H173.7M174.5,641.6H177.4M178.2,641.6H180.2M181.0,641.6H189.1M189.9,641.6H191.0" stroke="#222" stroke-width="1.6" fill="none" opacity="0.85"/><rect x="102.4" y="649" width="52.6" height="18.3" fill="#bbb" opacity=".45"/><path d="M102.4,643.6H203.6M102.4,649.0H203.6M102.4,653.4H203.6M102.4,657.8H203.6M102.4,662.2H203.6M102.4,667.2H203.6" stroke="#555" stroke-width="0.9" fill="none" opacity="0.9"/><path d="M102.4,651.2H203.6M102.4,655.6H203.6M102.4,660.0H203.6M102.4,664.6H203.6" stroke="#888" stroke-width="0.7" fill="none" opacity="0.8"/><path d="M155,643.6V667.2M179.5,643.6V667.2" stroke="#222" stroke-width="1" fill="none"/><path d="M110,646.4H148M161,646.4H173M186,646.4H197" stroke="#222" stroke-width="1.3" fill="none" opacity=".8"/><path d="M104.0,669.6H107.0M107.8,669.6H115.8M116.6,669.6H118.7M119.5,669.6H125.0M125.8,669.6H134.1M134.9,669.6H137.5M138.3,669.6H144.1M144.9,669.6H151.3M152.1,669.6H154.3M155.1,669.6H159.8M160.6,669.6H167.5M168.3,669.6H173.5M174.3,669.6H181.4M182.2,669.6H185.3M186.1,669.6H189.7M190.5,669.6H192.6M104.0,672.0H110.1M110.9,672.0H118.4M119.2,672.0H123.8M124.6,672.0H131.9M132.7,672.0H135.4M136.2,672.0H140.2M141.0,672.0H147.7M148.5,672.0H154.9" stroke="#222" stroke-width="1.6" fill="none" opacity="0.85"/><path d="M102.4,675.3H203.6" stroke="#111" stroke-width="1.6" fill="none" opacity=".85"/><rect x="112" y="677.5" width="91.6" height="4" fill="#aaa" opacity=".5"/><rect x="112" y="685" width="91.6" height="3.4" fill="#aaa" opacity=".5"/><rect x="112" y="690.5" width="91.6" height="5.5" fill="#aaa" opacity=".45"/><path d="M102.4,676.8H203.6M102.4,684.4H203.6M102.4,689.6H203.6M102.4,696.6H203.6" stroke="#333" stroke-width="0.9" fill="none" opacity="0.9"/><path d="M111.8,677V696.6M140,689.6V693M168,689.6V693M178,689.6V696.6M190,689.6V693" stroke="#222" stroke-width="0.9" fill="none"/><path d="M103,680H108M103,682.4H109M103,687H109M103,691.6H110M103,694H110M113,683H125M113,688.6H128M113,691H130M141,691H152M113,695.2H122M179,695.2H187M179,692.4H186" stroke="#222" stroke-width="1.3" fill="none" opacity=".85"/><rect x="103.6" y="681" width="4.4" height="3.6" fill="#3a6fc0" opacity=".6"/><path d="M102.4,697.6H170" stroke="#111" stroke-width="1.4" fill="none" opacity=".85"/><path d="M189,698.8H203.6" stroke="#111" stroke-width="1.4" fill="none" opacity=".85"/></svg>
<div class="t" style="top:356px;font-size:13px;line-height:15px;color:#555b70;left:3.2px;width:300px;text-align:center;">2</div>
<div class="t" style="top:536px;font-size:13px;line-height:15px;color:#555b70;left:3.2px;width:300px;text-align:center;">3</div>
<div class="t" style="top:718px;font-size:13px;line-height:15px;color:#555b70;left:3.2px;width:300px;text-align:center;">4</div>
<div style="left:81px;top:241.3px;width:169.3px;height:46.7px;background:#fff;border-bottom:1px solid #f1f2f6"></div>
<div style="left:117px;top:241.5px;width:1px;height:46px;background:#eef0f6"></div>
<svg style="left:86px;top:254px" width="16" height="22" viewBox="86 254 16 22"><path d="M96.2,259.3 L90.4,264.8 L96.2,270.4" stroke="#6b7287" stroke-width="2" fill="none" stroke-linecap="round" stroke-linejoin="round"/></svg>
<svg style="left:140px;top:254px" width="22" height="24" viewBox="140 254 22 24"><rect x="142" y="256" width="11.25" height="13.75" rx="1.6" fill="none" stroke="#2f6cff" stroke-width="1.6"/><path d="M144.5,260.75H150.6M144.5,264.4H148" stroke="#2f6cff" stroke-width="1.3" fill="none"/><circle cx="152.9" cy="269.25" r="6.3" fill="#fff"/><path d="M158.23,268.39 L158.23,270.11 L156.89,270.18 L156.38,271.41 L157.28,272.41 L156.06,273.63 L155.06,272.73 L153.84,273.24 L153.76,274.58 L152.04,274.58 L151.97,273.24 L150.74,272.73 L149.74,273.63 L148.52,272.41 L149.42,271.41 L148.91,270.19 L147.57,270.11 L147.57,268.39 L148.91,268.32 L149.42,267.09 L148.52,266.09 L149.74,264.87 L150.74,265.77 L151.96,265.26 L152.04,263.92 L153.76,263.92 L153.83,265.26 L155.06,265.77 L156.06,264.87 L157.28,266.09 L156.38,267.09 L156.89,268.31Z" fill="none" stroke="#2f6cff" stroke-width="1.1" stroke-linejoin="round"/><circle cx="152.9" cy="269.25" r="1.7" fill="none" stroke="#2f6cff" stroke-width="1.1"/></svg>
<div class="t" style="top:259px;font-size:11.6px;line-height:12px;color:#3a4056;letter-spacing:-0.408px;left:161.90px;-webkit-text-stroke:0.35px #3a4056;">Page Settings</div>
<div style="left:234.7px;top:288px;width:15.6px;height:520px;background:#f1f1f1"></div>
<div style="left:236.2px;top:478px;width:12.5px;height:313.7px;background:#c1c1c1"></div>
<svg style="left:234px;top:290px" width="17" height="14" viewBox="234 290 17 14"><path d="M239,299.2 L242.5,295 L246,299.2Z" fill="#505050"/></svg>
<svg style="left:234px;top:793px" width="17" height="14" viewBox="234 793 17 14"><path d="M239,796.8 L242.5,800.8 L246,796.8Z" fill="#a3a3a3"/></svg>
<div style="left:81px;top:199.2px;width:1448px;height:42px;background:#fff"></div>
<div style="left:81px;top:808px;width:1448px;height:5px;background:#fff"></div>
<div style="left:81px;top:128px;width:1448px;height:2px;background:#f3f4f7"></div>
<div style="left:81px;top:197.5px;width:1448px;height:1.5px;background:#eff1f5"></div>
<div style="left:0;top:0;width:0;height:0"><div class="t" style="top:98px;font-size:21.4px;line-height:24px;font-weight:700;color:#fb3f4f;left:93.86px;transform-origin:0 0;transform:scaleX(0.8385);-webkit-text-stroke:0.45px #fb3f4f;">P</div><div class="t" style="top:98px;font-size:21.4px;line-height:24px;font-weight:700;color:#fb3f4f;left:107.08px;transform-origin:0 0;transform:scaleX(0.9214);-webkit-text-stroke:0.45px #fb3f4f;">D</div><div class="t" style="top:98px;font-size:21.4px;line-height:24px;font-weight:700;color:#fb3f4f;left:122.57px;transform-origin:0 0;transform:scaleX(0.7333);-webkit-text-stroke:0.45px #fb3f4f;">F</div></div>
<div class="t" style="top:107px;font-size:10.8px;line-height:12px;font-weight:700;color:#2b3350;left:134.00px;transform-origin:0 0;transform:scaleX(0.8458);">Liner</div>
<svg style="left:106px;top:100px" width="18" height="18" viewBox="106 100 18 18" ><path d="M111.6,103 L114.2,103 C117.6,103 119,105.6 119,109.1 C119,112.7 117.6,115.3 114.2,115.3 L111.6,115.3 Z" fill="#fb3f4f"/><g stroke="#fff" fill="none" stroke-linecap="round"><path d="M112.3,100.5 C112.6,106 112,112 109.2,117.6" stroke-width="1.5"/><path d="M113.2,101 C114.5,106 117,109.5 122,110.4" stroke-width="1.3"/><path d="M108.5,114.6 C112,111.8 117,110.6 121.5,110.9" stroke-width="1.3"/></g></svg>
<div style="left:164.5px;top:94px;width:372.5px;height:30.7px;border:1px solid #e5e8ef;border-radius:4px;background:#fff"></div>
<div class="t" style="top:102px;font-size:14.6px;line-height:16px;color:#a0a7bb;letter-spacing:-0.045px;left:177.30px;">Search forms (e.g. US Tax Form)...</div>
<svg style="left:505px;top:100px" width="18" height="18" viewBox="505 100 18 18" ><circle cx="512.5" cy="107.2" r="4.3" fill="none" stroke="#5d6479" stroke-width="2"/><path d="M515.8,110.5 L520,114.7" stroke="#5d6479" stroke-width="2.2" stroke-linecap="round"/></svg>
<div style="left:933.4px;top:98.2px;width:81.4px;height:22.4px;border:1px solid #e3e6ee;border-radius:3px;background:#fff"></div>
<div class="t" style="top:103px;font-size:12px;line-height:14px;color:#454a5e;letter-spacing:-0.235px;left:940.30px;">Form 990-EZ</div>
<div class="t" style="top:102px;font-size:12px;line-height:14px;color:#5b83dc;letter-spacing:-0.066px;left:1436.30px;">Support</div>
<div class="t" style="top:102px;font-size:12px;line-height:14px;color:#5b83dc;letter-spacing:-0.104px;left:1492.00px;">Log in</div>
<div style="left:94.8px;top:142.2px;width:46.2px;height:30.7px;background:#edeef2;border-radius:3px"></div>
<div class="t" style="top:177px;font-size:11px;line-height:12px;color:#5b6178;left:-32.1px;width:300px;text-align:center;">Select</div>
<div style="left:187.1px;top:142.2px;width:46.2px;height:30.7px;border:1px solid #e4e7ee;border-radius:2.5px;background:#fff"></div>
<div class="t" style="top:177px;font-size:11px;line-height:12px;color:#5b6178;left:60.2px;width:300px;text-align:center;">Add Date</div>
<div style="left:244.3px;top:142.2px;width:46.2px;height:30.7px;border:1px solid #e4e7ee;border-radius:2.5px;background:#fff"></div>
<div class="t" style="top:177px;font-size:11px;line-height:12px;color:#5b6178;left:117.4px;width:300px;text-align:center;">Add Sign</div>
<div style="left:336.8px;top:142.2px;width:46.2px;height:30.7px;border:1px solid #e4e7ee;border-radius:2.5px;background:#fff"></div>
<div class="t" style="top:177px;font-size:11px;line-height:12px;color:#5b6178;left:209.9px;width:300px;text-align:center;">Add Text</div>
<div style="left:394.3px;top:142.2px;width:46.2px;height:30.7px;border:1px solid #e4e7ee;border-radius:2.5px;background:#fff"></div>
<div class="t" style="top:177px;font-size:11px;line-height:12px;color:#5b6178;left:267.4px;width:300px;text-align:center;">Insert</div>
<div style="left:452.2px;top:142.2px;width:46.2px;height:30.7px;border:1px solid #e4e7ee;border-radius:2.5px;background:#fff"></div>
<div class="t" style="top:177px;font-size:11px;line-height:12px;color:#5b6178;left:325.3px;width:300px;text-align:center;">Highlight</div>
<div style="left:509.5px;top:142.2px;width:46.2px;height:30.7px;border:1px solid #e4e7ee;border-radius:2.5px;background:#fff"></div>
<div class="t" style="top:177px;font-size:11px;line-height:12px;color:#5b6178;left:382.6px;width:300px;text-align:center;">Blackout</div>
<div style="left:567.1px;top:142.2px;width:46.2px;height:30.7px;border:1px solid #e4e7ee;border-radius:2.5px;background:#fff"></div>
<div class="t" style="top:177px;font-size:11px;line-height:12px;color:#5b6178;left:440.2px;width:300px;text-align:center;">Whiteout</div>
<div style="left:624.9px;top:142.2px;width:46.2px;height:30.7px;border:1px solid #e4e7ee;border-radius:2.5px;background:#fff"></div>
<div class="t" style="top:177px;font-size:11px;line-height:12px;color:#5b6178;left:498px;width:300px;text-align:center;">Draw</div>
<div style="left:682.3px;top:142.2px;width:46.2px;height:30.7px;border:1px solid #e4e7ee;border-radius:2.5px;background:#fff"></div>
<div class="t" style="top:177px;font-size:11px;line-height:12px;color:#5b6178;left:555.4px;width:300px;text-align:center;">Help</div>
<div style="left:1174.4px;top:142.2px;width:46.2px;height:30.7px;border:1px solid #e4e7ee;border-radius:2.5px;background:#fff"></div>
<div class="t" style="top:177px;font-size:11px;line-height:12px;color:#5b6178;left:1047.5px;width:300px;text-align:center;">Add Fields</div>
<div style="left:1242.3px;top:142.2px;width:46.2px;height:30.7px;border:1px solid #e4e7ee;border-radius:2.5px;background:#fff"></div>
<div class="t" style="top:177px;font-size:11px;line-height:12px;color:#5b6178;left:1115.4px;width:300px;text-align:center;">Watermark</div>
<div style="left:1308.9px;top:142.2px;width:46.2px;height:30.7px;border:1px solid #e4e7ee;border-radius:2.5px;background:#fff"></div>
<div class="t" style="top:177px;font-size:11px;line-height:12px;color:#5b6178;left:1182px;width:300px;text-align:center;">Quick Fill</div>
<svg style="left:95px;top:142px" width="46" height="31" viewBox="95 142 46 31" ><path d="M116,161 L109.5,161 L109.5,149.3 L121.6,149.3 L121.6,156" stroke="#5d647b" stroke-width="1" stroke-dasharray="1.3 1.3" fill="none"/><path d="M116.6,153.1 L125.1,161 L120.5,161.6 L116.6,165Z" stroke="#454d66" fill="none" stroke-linecap="round" stroke-linejoin="round" stroke-width="1.6"/></svg>
<svg style="left:187px;top:142px" width="46" height="31" viewBox="187 142 46 31" ><rect x="201.9" y="150.6" width="15.95" height="15" rx="1.8" stroke="#454d66" fill="none" stroke-linecap="round" stroke-linejoin="round" stroke-width="1.5"/><path d="M201.9,154.4 L217.85,154.4 M205.4,149 L205.4,151.6 M213.9,149 L213.9,151.6" stroke="#454d66" fill="none" stroke-linecap="round" stroke-linejoin="round" stroke-width="1.5"/><circle cx="206.3" cy="157.9" r="0.95" fill="#454d66"/><circle cx="206.3" cy="161.7" r="0.95" fill="#454d66"/><circle cx="209.9" cy="157.9" r="0.95" fill="#454d66"/><circle cx="209.9" cy="161.7" r="0.95" fill="#454d66"/><circle cx="213.4" cy="157.9" r="0.95" fill="#454d66"/><circle cx="213.4" cy="161.7" r="0.95" fill="#454d66"/></svg>
<svg style="left:244.5px;top:142px" width="46" height="31" viewBox="244.5 142 46 31" ><path d="M261.2,161.5 L263.3,153.1 L268.7,150.8 L270,149.4 L273.9,152.9 L272.4,154.4 L270.4,159.2 L265.3,160.6 Z" stroke="#454d66" fill="none" stroke-linecap="round" stroke-linejoin="round" stroke-width="1.3"/><path d="M268.7,150.8 L272.4,154.4 M262,160.6 L267.6,155.6" stroke="#454d66" fill="none" stroke-linecap="round" stroke-linejoin="round" stroke-width="1.3"/><path d="M261,163.3 L264.8,163.3 Q265.8,163.3 265.8,164.3 Q265.8,165.4 266.9,165.4 L272.7,165.4" stroke="#454d66" fill="none" stroke-linecap="round" stroke-linejoin="round" stroke-width="1.3"/></svg>
<svg style="left:337px;top:142px" width="46" height="31" viewBox="337 142 46 31" ><path d="M352.8,150 L366.7,150 M359.7,150 L359.7,165.7" stroke="#454d66" fill="none" stroke-linecap="round" stroke-linejoin="round" stroke-width="1.6"/></svg>
<svg style="left:394.5px;top:142px" width="46" height="31" viewBox="394.5 142 46 31" ><path d="M402.5,157.6 L418.6,157.6 M410.5,149.7 L410.5,165.7" stroke="#454d66" fill="none" stroke-linecap="round" stroke-linejoin="round" stroke-width="1.6"/><path d="M428.4,155.8 L431.9,159.2 L435.4,155.8" stroke="#454d66" fill="none" stroke-linecap="round" stroke-linejoin="round" stroke-width="1.5"/></svg>
<svg style="left:452px;top:142px" width="46" height="31" viewBox="452 142 46 31" ><g transform="translate(475.8,158.3) rotate(26) scale(0.9)"><path d="M-1.6,-3.2 L-1.6,-7.2 A1.9,1.9 0 1 1 1.6,-7.2 L1.6,-3.2 L4.9,-2.6 L4.9,1.6 L-4.9,1.6 L-4.9,-2.6 Z" fill="#fff" stroke="#454d66" stroke-width="1.5" stroke-linejoin="round" stroke-linecap="round"/><path d="M-4.9,1.6 L-4.9,7 L4.9,7 L4.9,1.6Z" fill="#f7ef3c" stroke="#454d66" stroke-width="1.5" stroke-linejoin="round" stroke-linecap="round"/><path d="M-1.8,7 L-1.8,4.8 M1.4,7 L1.4,4.8 M-0.2,7 L-0.2,5.6" fill="none" stroke="#454d66" stroke-width="1.5" stroke-linejoin="round" stroke-linecap="round"/></g></svg>
<svg style="left:509.5px;top:142px" width="46" height="31" viewBox="509.5 142 46 31" ><g transform="translate(533.3,158.3) rotate(26) scale(0.9)"><path d="M-1.6,-3.2 L-1.6,-7.2 A1.9,1.9 0 1 1 1.6,-7.2 L1.6,-3.2 L4.9,-2.6 L4.9,1.6 L-4.9,1.6 L-4.9,-2.6 Z" fill="#fff" stroke="#454d66" stroke-width="1.5" stroke-linejoin="round" stroke-linecap="round"/><path d="M-4.9,1.6 L-4.9,7 L4.9,7 L4.9,1.6Z" fill="#454d66" stroke="#454d66" stroke-width="1.5" stroke-linejoin="round" stroke-linecap="round"/></g></svg>
<svg style="left:567px;top:142px" width="46" height="31" viewBox="567 142 46 31" ><g transform="translate(590.8,158.3) rotate(26) scale(0.9)"><path d="M-1.6,-3.2 L-1.6,-7.2 A1.9,1.9 0 1 1 1.6,-7.2 L1.6,-3.2 L4.9,-2.6 L4.9,1.6 L-4.9,1.6 L-4.9,-2.6 Z" fill="#fff" stroke="#454d66" stroke-width="1.5" stroke-linejoin="round" stroke-linecap="round"/><path d="M-4.9,1.6 L-4.9,7 L4.9,7 L4.9,1.6" fill="#fff" stroke="#454d66" stroke-width="1.5" stroke-linejoin="round" stroke-linecap="round"/><path d="M-1.8,7 L-1.8,4.6 M1.4,7 L1.4,4.6 M-0.2,7 L-0.2,5.4" fill="none" stroke="#454d66" stroke-width="1.5" stroke-linejoin="round" stroke-linecap="round"/></g></svg>
<svg style="left:625px;top:142px" width="46" height="31" viewBox="625 142 46 31" ><path d="M655.2,149.8 Q656.6,150.6 655.4,153 Q653.6,157.2 651.3,159.2 Q648.6,161 647.1,159.3 Q645.9,157.6 647.6,155.6 Q650.6,152 653.4,150.1 Q654.5,149.4 655.2,149.8Z" stroke="#454d66" fill="none" stroke-linecap="round" stroke-linejoin="round" stroke-width="1.4"/><path d="M648.3,160.2 A4.1,3.9 0 1 1 640.3,163.2 Q640.4,160.8 639.4,159.3 Q640.8,161.4 642.3,161.3 Q643.4,159.3 646.2,158.8" stroke="#454d66" fill="none" stroke-linecap="round" stroke-linejoin="round" stroke-width="1.4"/></svg>
<div class="t" style="top:145px;font-size:23.4px;line-height:26px;color:#454d66;left:555.3px;width:300px;text-align:center;transform:scaleX(0.8);">?</div>
<svg style="left:1174.4px;top:142px" width="46" height="31" viewBox="1174.4 142 46 31" ><rect x="1189.4" y="149.7" width="16.6" height="3.5" rx="0.8" fill="none" stroke="#4cc871" stroke-width="1.4"/><rect x="1189.4" y="156.1" width="16.6" height="3.4" rx="0.8" fill="none" stroke="#4cc871" stroke-width="1.4"/><rect x="1189.4" y="162.4" width="10" height="3.45" rx="0.8" fill="none" stroke="#4cc871" stroke-width="1.4"/><path d="M1201.7,164.2 L1205.9,164.2 M1203.8,162.1 L1203.8,166.3" stroke="#4cc871" stroke-width="1.7" fill="none"/></svg>
<svg style="left:1242.4px;top:142px" width="46" height="31" viewBox="1242.4 142 46 31" ><rect x="1258.9" y="149.85" width="12.6" height="13.65" rx="1" fill="none" stroke="#5b8df0" stroke-width="1.4"/><path d="M1261.3,153.7 L1266.7,153.7 M1261.3,156.7 L1268.9,156.7 M1261.3,159.3 L1266.7,159.3" stroke="#5b8df0" stroke-width="1.1" fill="none"/><path d="M1269.6,159.6 Q1272.4,162.6 1272.2,163.6 A2.6,2.6 0 1 1 1267,163.6 Q1266.8,162.6 1269.6,159.6Z" fill="#fff" stroke="#5b8df0" stroke-width="1.3"/></svg>
<svg style="left:1309px;top:142px" width="46" height="31" viewBox="1309 142 46 31" ><path d="M1334.6,149.6 L1326.2,158.3 L1330.4,158.65 L1328.3,165.6 L1336.7,156.9 L1332.7,156.35Z" stroke="#454d66" fill="none" stroke-linecap="round" stroke-linejoin="round" stroke-width="1.4"/></svg>
<div style="left:1408.7px;top:144.6px;width:115.4px;height:38.6px;background:#fb4151;border-radius:3px"></div>
<div class="t" style="top:155px;font-size:14px;line-height:16px;font-weight:700;color:#fff;letter-spacing:0.395px;left:1447.90px;">Done</div>
<div style="left:95px;top:205.3px;width:57px;height:29.2px;border:1px solid #eceef4;border-radius:3px;background:#fff"></div>
<div style="left:123.2px;top:205.3px;width:1px;height:29.2px;background:#e9ebf2"></div>
<svg style="left:95px;top:205px" width="57" height="30" viewBox="95 205 57 30" ><path d="M106.8,211.5 L102.6,215.5 L106.8,219.4 M102.8,215.5 L110,215.5 A4.9,4.9 0 0 1 110,225.3 L107.4,225.3" stroke="#c6cad4" stroke-width="1.6" fill="none" stroke-linecap="round" stroke-linejoin="round"/><path d="M140.1,211.5 L144.3,215.5 L140.1,219.4 M144.1,215.5 L136.9,215.5 A4.9,4.9 0 0 0 136.9,225.3 L139.5,225.3" stroke="#c6cad4" stroke-width="1.6" fill="none" stroke-linecap="round" stroke-linejoin="round"/></svg>
<div style="left:157px;top:205.3px;width:86.6px;height:29.2px;border:1px solid #e7e9f0;border-radius:3px;background:#fff"></div>
<div class="t" style="top:213px;font-size:12.6px;line-height:14px;color:#4b5166;letter-spacing:-0.204px;left:166.60px;">100%</div>
<svg style="left:222px;top:215px" width="16" height="12" viewBox="222 215 16 12" ><path d="M224.9,219 L229.6,223.6 L234.3,219" stroke="#9aa0b0" stroke-width="1.5" fill="none" stroke-linecap="round" stroke-linejoin="round"/></svg>
<div class="t" style="top:213px;font-size:12.5px;line-height:14px;color:#5b6178;letter-spacing:-0.138px;left:257.80px;">Fill the form or use another tools to change page content</div>
<div class="t" style="top:212px;font-size:13px;line-height:15px;color:#4b5166;letter-spacing:0.128px;left:1426.30px;-webkit-text-stroke:0.4px #4b5166;">Show grid</div>
<div style="left:1493px;top:212.3px;width:30.8px;height:15.4px;background:#d5dae5;border-radius:8px"></div>
<div style="left:1498.9px;top:215.1px;width:10px;height:10px;background:#fff;border-radius:5px"></div>
<div style="left:81px;top:240.6px;width:1448px;height:1px;background:#eff0f4"></div>
</div></body></html>
